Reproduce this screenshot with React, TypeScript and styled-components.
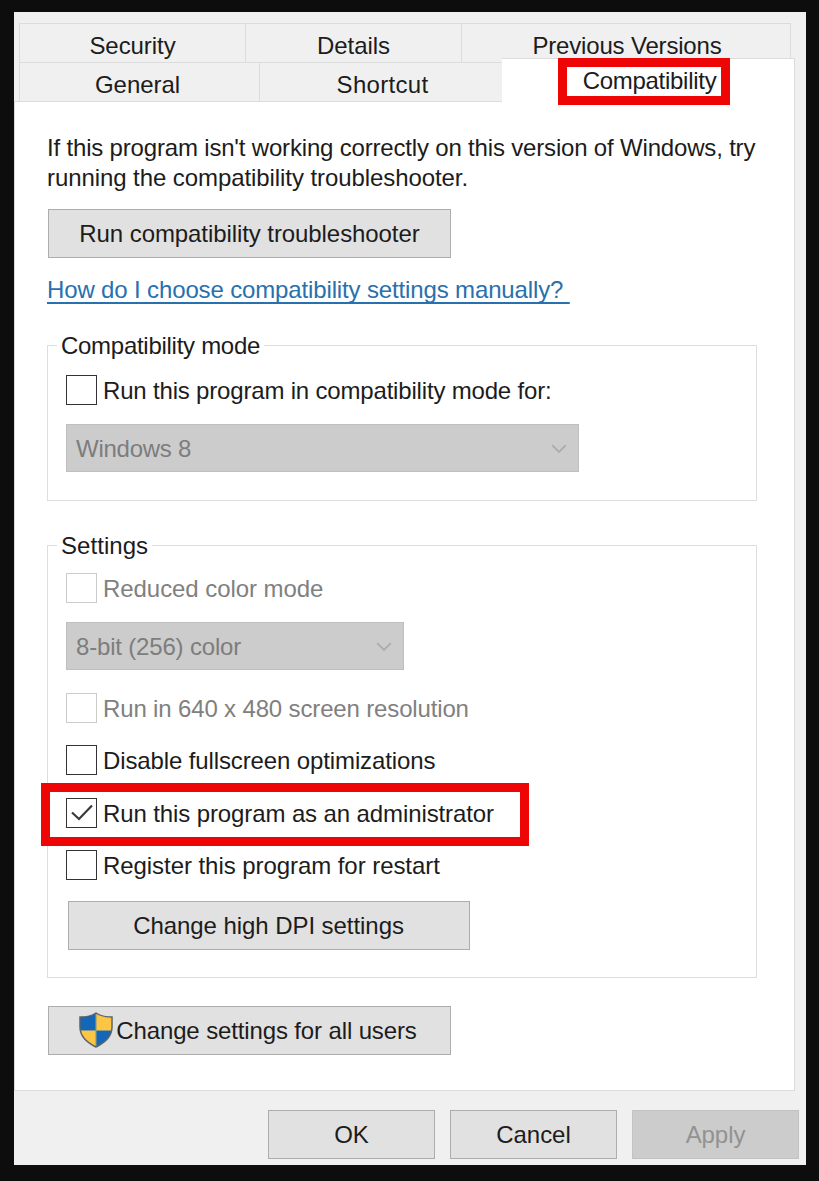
import React from 'react';
import styled, { createGlobalStyle } from 'styled-components';

const GlobalStyle = createGlobalStyle`
  *, *::before, *::after { box-sizing: border-box; }
  html, body { margin: 0; background: #0d0d0d; }
  body {
    font-family: "Liberation Sans", Arial, sans-serif;
    font-size: 24px;
    line-height: 30px;
    letter-spacing: -0.06px;
    color: #1c1c1c;
  }
`;

const Desktop = styled.div`
  height: 1181px;
  width: 819px;
  padding: 12px 13px 16px 14px;
  background: #0d0d0d;
`;

const Dialog = styled.main`
  display: flex;
  flex-direction: column;
  height: 1153px;
  padding-top: 11px;
  background: #f0f0f0;
`;

const Label = styled.span<{ $track?: number }>`
  letter-spacing: ${(p) => p.$track ?? -0.06}px;
  white-space: pre;
`;

const TabRow = styled.div<{ $width: number }>`
  display: flex;
  width: ${(p) => p.$width}px;
  height: 39px;
  margin-left: 5px;
`;

const Tab = styled.div<{ $width: number; $last?: boolean; $inset?: string }>`
  display: flex;
  align-items: center;
  justify-content: center;
  width: ${(p) => p.$width}px;
  height: 39px;
  padding: ${(p) => p.$inset ?? '6px 0 0'};
  border: solid #dcdcdc;
  border-width: 1px ${(p) => (p.$last ? 1 : 0)}px 0 1px;
`;

const ActiveTab = styled.div`
  position: relative;
  z-index: 1;
  display: flex;
  align-items: center;
  justify-content: center;
  width: 293px;
  height: 44px;
  margin-top: -4px;
  padding-left: 3px;
  background: #fff;
  border: solid #dcdcdc;
  border-width: 1px 1px 0 0;
`;

const Highlight = styled.div<{ $top: number; $left: number; $width: number; $height: number }>`
  position: absolute;
  top: ${(p) => p.$top}px;
  left: ${(p) => p.$left}px;
  width: ${(p) => p.$width}px;
  height: ${(p) => p.$height}px;
  border: 9px solid #ee0606;
  pointer-events: none;
`;

const Panel = styled.section`
  display: flex;
  flex-direction: column;
  align-items: flex-start;
  width: 781px;
  height: 990px;
  padding: 31px 0 0 32px;
  background: #fff;
  border: 1px solid #dcdcdc;
`;

const Intro = styled.p`
  width: 730px;
  margin: 0;
`;

const Button = styled.button<{ $width: number; $disabled?: boolean }>`
  display: flex;
  align-items: center;
  justify-content: center;
  width: ${(p) => p.$width}px;
  height: 49px;
  padding: 0;
  font: inherit;
  letter-spacing: inherit;
  color: ${(p) => (p.$disabled ? '#929292' : '#1c1c1c')};
  background: ${(p) => (p.$disabled ? '#cccccc' : '#e1e1e1')};
  border: 1px solid ${(p) => (p.$disabled ? '#c2c2c2' : '#adadad')};
`;

const TroubleshootButton = styled(Button)`
  margin: 16px 0 0 1px;
`;

const HelpLink = styled.a`
  margin-top: 17px;
  height: 30px;
  color: #2870ae;
  letter-spacing: -0.14px;
  text-decoration: underline;
  text-decoration-thickness: 1.5px;
  text-underline-offset: 4px;
  text-decoration-skip-ink: none;
  white-space: pre;
`;

const Group = styled.div<{ $top: number; $height: number }>`
  position: relative;
  display: flex;
  flex-direction: column;
  align-items: flex-start;
  width: 710px;
  height: ${(p) => p.$height}px;
  margin-top: ${(p) => p.$top}px;
  padding-left: 9px;
  border: 1px solid #dedede;
`;

const Legend = styled.div`
  height: 30px;
  margin-top: -15px;
  padding: 0 4px;
  background: #fff;
`;

const Option = styled.label<{ $top: number; $disabled?: boolean }>`
  display: flex;
  align-items: center;
  gap: 6px;
  height: 30px;
  margin: ${(p) => p.$top}px 0 0 9px;
  line-height: 31px;
  color: ${(p) => (p.$disabled ? '#808080' : '#1c1c1c')};
`;

const Box = styled.span<{ $disabled?: boolean }>`
  display: flex;
  align-items: center;
  justify-content: center;
  width: 31px;
  height: 30px;
  background: #fff;
  border: ${(p) => (p.$disabled ? '1px solid #cccccc' : '1.5px solid #333333')};
`;

const Select = styled.div<{ $width: number; $top: number }>`
  display: flex;
  align-items: center;
  justify-content: space-between;
  width: ${(p) => p.$width}px;
  height: 48px;
  margin: ${(p) => p.$top}px 0 0 9px;
  padding: 1px 11px 0 9px;
  line-height: 31px;
  color: #7d7d7d;
  background: #cccccc;
  border: 1px solid #bfbfbf;
`;

const DpiButton = styled(Button)`
  margin: 21px 0 0 11px;
  padding-right: 1px;
`;

const UsersButton = styled(Button)`
  margin: 28px 0 0 1px;
  padding-right: 3px;
  gap: 3px;
`;

const Footer = styled.footer`
  display: flex;
  justify-content: flex-end;
  gap: 15px;
  padding: 19px 7px 0 0;
`;

const CheckMark = () => (
  <svg width="24" height="20" viewBox="0 0 24 20" fill="none">
    <path d="M2 9.5 L9 16 L22 2.5" stroke="#3a3a3a" strokeWidth="2.2" />
  </svg>
);

const Chevron = () => (
  <svg width="16" height="10" viewBox="0 0 16 10" fill="none">
    <path d="M1.2 1.2 L8 8 L14.8 1.2" stroke="#acacac" strokeWidth="1.8" />
  </svg>
);

const ShieldSvg = styled.svg`
  margin-bottom: 2px;
`;

const shieldOutline =
  'M17.5 1 C13 4 7 5 1 5 V15 C1 25 9 31 17.5 35 C26 31 34 25 34 15 V5 C28 5 22 4 17.5 1 Z';

const Shield = () => (
  <ShieldSvg width="34" height="36" viewBox="0 0 35 36" preserveAspectRatio="none">
    <defs>
      <clipPath id="shield">
        <path d={shieldOutline} />
      </clipPath>
    </defs>
    <g clipPath="url(#shield)">
      <rect width="35" height="36" fill="#1267b8" />
      <rect x="17.5" width="18" height="18.5" fill="#fcc544" />
      <rect y="18.5" width="17.5" height="18" fill="#fcc544" />
      <path d="M17.5 0 V36 M0 18.5 H35" stroke="#8c9a80" strokeWidth="1.2" />
    </g>
    <path d={shieldOutline} fill="none" stroke="#5b6468" strokeWidth="1.5" />
  </ShieldSvg>
);

type CheckProps = {
  label: string;
  top: number;
  track?: number;
  checked?: boolean;
  disabled?: boolean;
};

const CheckOption = ({ label, top, track, checked, disabled }: CheckProps) => (
  <Option $top={top} $disabled={disabled}>
    <Box $disabled={disabled}>{checked && <CheckMark />}</Box>
    <Label $track={track}>{label}</Label>
  </Option>
);

export default function App() {
  return (
    <>
      <GlobalStyle />
      <Desktop>
        <Dialog>
          <TabRow $width={772}>
            <Tab $width={226}>Security</Tab>
            <Tab $width={216}>Details</Tab>
            <Tab $width={330} $last $inset="6px 0 0 2px">
              <Label $track={-0.18}>Previous Versions</Label>
            </Tab>
          </TabRow>
          <TabRow $width={776}>
            <Tab $width={240} $inset="6px 4px 0 0">General</Tab>
            <Tab $width={243} $inset="6px 0 0 3px">
              <Label $track={0.3}>Shortcut</Label>
            </Tab>
            <ActiveTab>
              <Label $track={-0.28}>Compatibility</Label>
              <Highlight $top={-1} $left={56} $width={172} $height={47} />
            </ActiveTab>
          </TabRow>
          <Panel>
            <Intro>
              <Label $track={-0.177}>
                If this program isn't working correctly on this version of Windows, try
              </Label>
              <br />
              <Label $track={-0.08}>running the compatibility troubleshooter.</Label>
            </Intro>
            <TroubleshootButton $width={403}>
              <Label $track={-0.08}>Run compatibility troubleshooter</Label>
            </TroubleshootButton>
            <HelpLink>{'How do I choose compatibility settings manually? '}</HelpLink>
            <Group $top={40} $height={156}>
              <Legend>
                <Label $track={-0.28}>Compatibility mode</Label>
              </Legend>
              <CheckOption label="Run this program in compatibility mode for:" top={14} track={-0.18} />
              <Select $width={513} $top={19}>
                <Label $track={-0.25}>Windows 8</Label>
                <Chevron />
              </Select>
            </Group>
            <Group $top={44} $height={433}>
              <Legend>
                <Label $track={0.05}>Settings</Label>
              </Legend>
              <CheckOption label="Reduced color mode" top={12} disabled />
              <Select $width={338} $top={19}>
                <Label $track={-0.18}>8-bit (256) color</Label>
                <Chevron />
              </Select>
              <CheckOption label="Run in 640 x 480 screen resolution" top={23} track={-0.15} disabled />
              <CheckOption label="Disable fullscreen optimizations" top={22} track={-0.12} />
              <CheckOption label="Run this program as an administrator" top={23} track={-0.11} checked />
              <CheckOption label="Register this program for restart" top={22} />
              <DpiButton $width={402}>Change high DPI settings</DpiButton>
              <Highlight $top={237} $left={-7} $width={488} $height={63} />
            </Group>
            <UsersButton $width={403}>
              <Shield />
              <Label $track={-0.13}>Change settings for all users</Label>
            </UsersButton>
          </Panel>
          <Footer>
            <Button $width={167}>OK</Button>
            <Button $width={167}>Cancel</Button>
            <Button $width={167} $disabled>Apply</Button>
          </Footer>
        </Dialog>
      </Desktop>
    </>
  );
}
